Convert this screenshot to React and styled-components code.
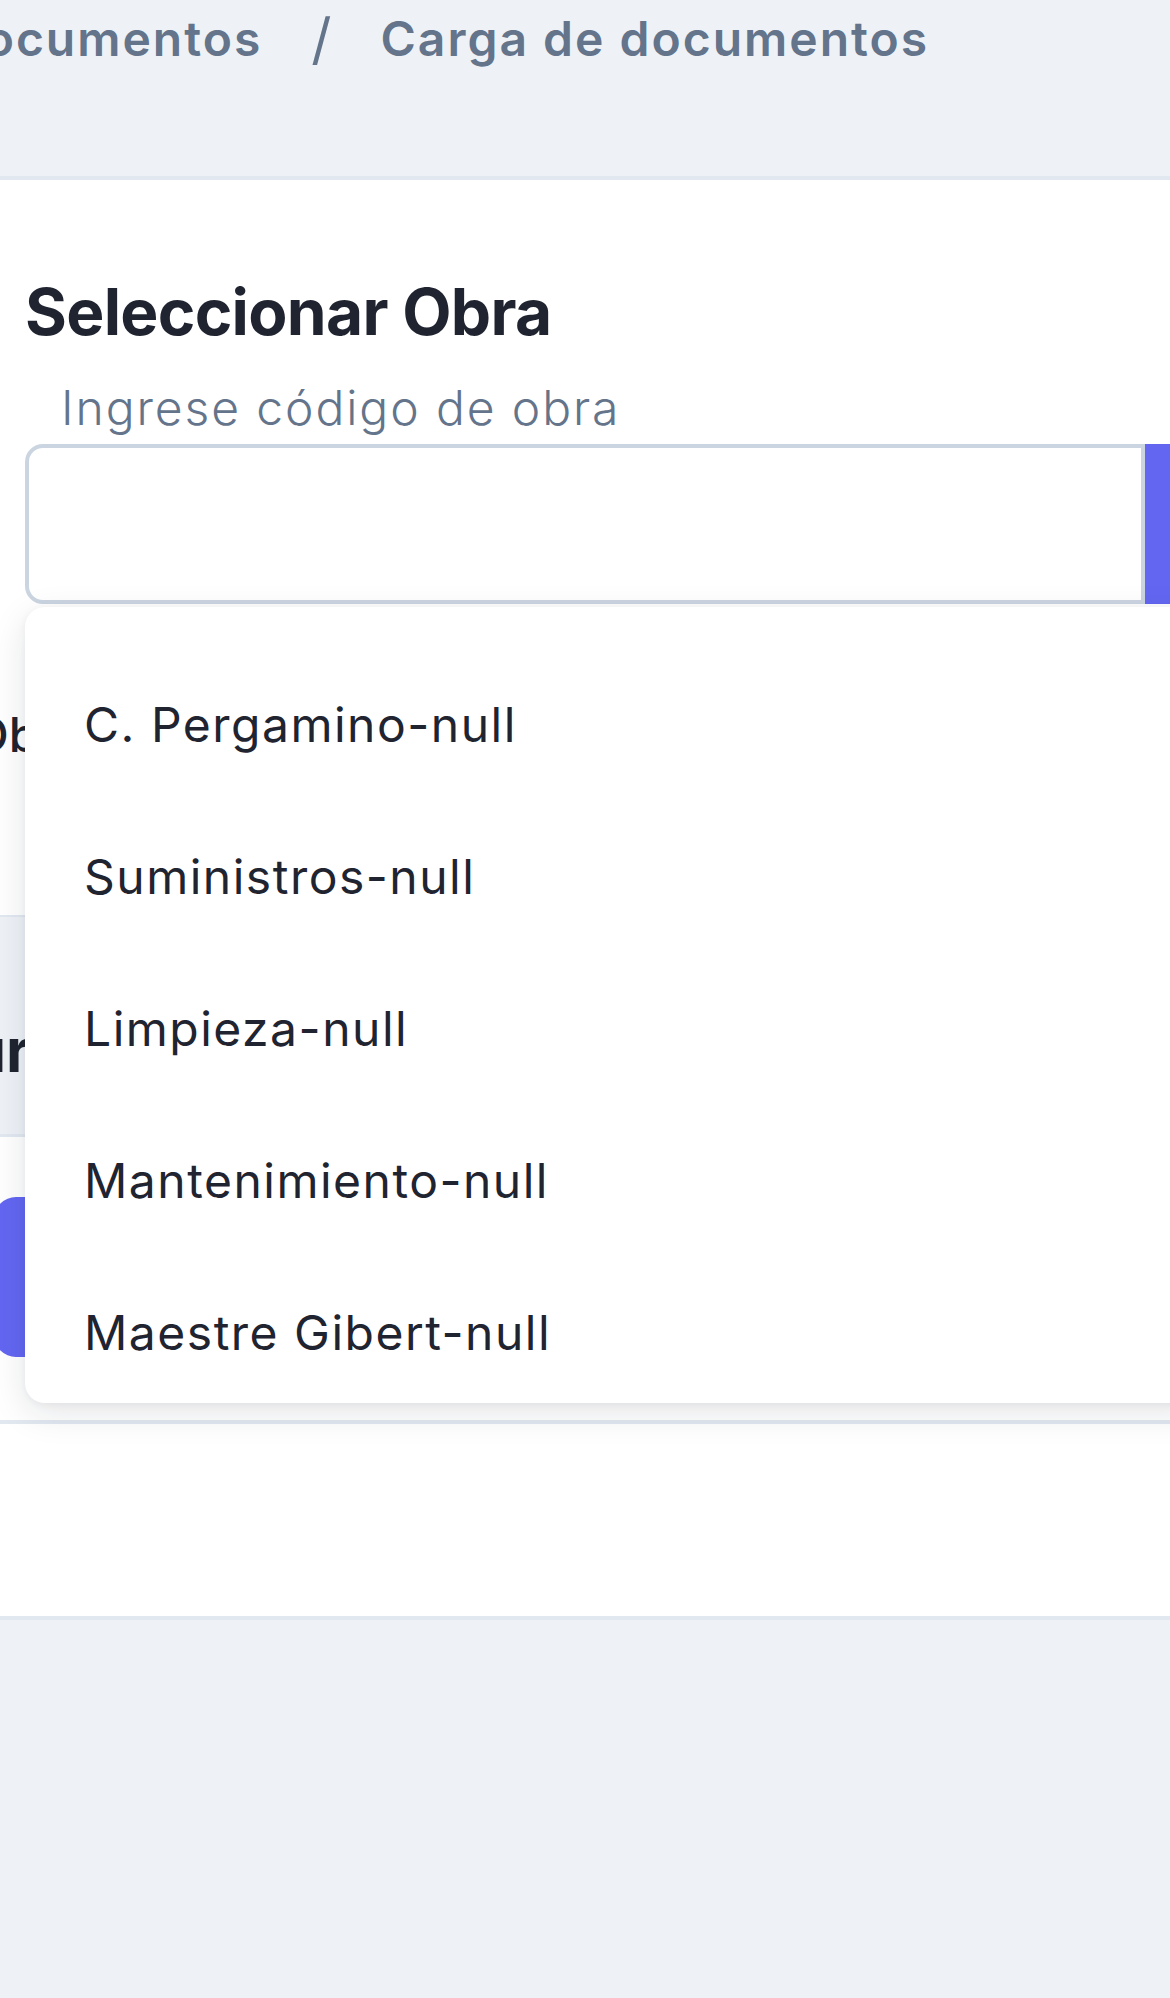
import React from "react";
import styled, { createGlobalStyle } from "styled-components";

const Global = createGlobalStyle`
  html, body { margin: 0; padding: 0; background: #eef2f7; }
  body { font-family: Inter, "Noto Sans", sans-serif; color: #1f2430; }
  * { box-sizing: border-box; }
`;

const Page = styled.div`
  width: 1170px;
  height: 1998px;
  overflow: hidden;
  position: relative;
  background: #eef2f7;
`;

const Header = styled.header`
  height: 180px;
  padding-top: 15px;
  background: #eef2f7;
  border-bottom: 4px solid #e2e8f0;
`;

const Crumbs = styled.nav`
  display: flex;
  align-items: center;
  margin-left: -52px;
  gap: 49px;
  white-space: nowrap;
`;

const Crumb = styled.span`
  font-size: 48px;
  line-height: 48px;
  font-weight: 600;
  letter-spacing: 2px;
  color: #64748b;
`;

const Sep = styled.span`
  font-size: 56px;
  line-height: 48px;
  font-weight: 400;
  color: #64748b;
`;

const Card = styled.main`
  background: #ffffff;
  border-bottom: 4px solid #e2e8f0;
`;

const Top = styled.section`
  padding: 100px 0 156px 25px;
`;

const Title = styled.h1`
  margin: 0;
  font-size: 64px;
  line-height: 64px;
  font-weight: 700;
  letter-spacing: -0.7px;
  color: #1f2430;
`;

const Field = styled.div`
  position: relative;
  margin-top: 40px;
`;

const Label = styled.label`
  display: block;
  padding-left: 36px;
  font-size: 48px;
  line-height: 48px;
  font-weight: 300;
  letter-spacing: 1.9px;
  color: #64748b;
`;

const InputRow = styled.div`
  display: flex;
  margin-top: 12px;
  height: 160px;
`;

const Input = styled.input`
  width: 1120px;
  height: 160px;
  flex: none;
  border: 4px solid #cbd5e1;
  border-radius: 18px 0 0 18px;
  background: #ffffff;
  outline: none;
`;

const SearchButton = styled.button`
  flex: none;
  width: 200px;
  height: 160px;
  border: none;
  background: #6366f1;
`;

const Menu = styled.ul`
  position: absolute;
  left: 0;
  top: calc(100% + 3px);
  width: 1180px;
  margin: 0;
  padding: 36px 0 0;
  list-style: none;
  background: #ffffff;
  border-radius: 20px;
  box-shadow: 0 10px 36px rgba(15, 23, 42, 0.11), 0 2px 8px rgba(15, 23, 42, 0.05);
  z-index: 10;
`;

const Option = styled.li`
  height: 152px;
  display: flex;
  align-items: center;
  padding: 12px 0 0 59px;
  font-size: 48px;
  line-height: 48px;
  font-weight: 400;
  letter-spacing: 1.5px;
  color: #1f2430;
`;

const Selected = styled.p`
  margin: 107px 0 0 -53px;
  font-size: 48px;
  line-height: 48px;
  font-weight: 500;
  color: #1f2430;
  white-space: nowrap;
`;

const THead = styled.div`
  height: 222px;
  display: flex;
  align-items: center;
  padding-top: 48px;
  background: #eef2f7;
  border-top: 2px solid #e2e8f0;
  border-bottom: 3px solid #e2e8f0;
`;

const HeadCell = styled.span`
  margin-left: -67px;
  font-size: 60px;
  line-height: 60px;
  font-weight: 700;
  color: #1f2430;
  white-space: nowrap;
`;

const TRow = styled.div`
  height: 287px;
  padding-top: 60px;
  border-bottom: 4px solid #e2e8f0;
`;

const UploadButton = styled.button`
  display: block;
  margin-left: -6px;
  width: 400px;
  height: 160px;
  border: none;
  border-radius: 22px;
  background: #6366f1;
  color: #ffffff;
  font-family: inherit;
  font-size: 44px;
  font-weight: 600;
`;

const Footer = styled.div`
  height: 192px;
`;

const obras = [
  "C. Pergamino-null",
  "Suministros-null",
  "Limpieza-null",
  "Mantenimiento-null",
  "Maestre Gibert-null",
];

export default function App() {
  return (
    <Page>
      <Global />
      <Header>
        <Crumbs>
          <Crumb>Documentos</Crumb>
          <Sep>/</Sep>
          <Crumb>Carga de documentos</Crumb>
        </Crumbs>
      </Header>
      <Card>
        <Top>
          <Title>Seleccionar Obra</Title>
          <Field>
            <Label>Ingrese código de obra</Label>
            <InputRow>
              <Input type="text" />
              <SearchButton aria-label="Buscar" />
            </InputRow>
            <Menu>
              {obras.map((o) => (
                <Option key={o}>{o}</Option>
              ))}
            </Menu>
          </Field>
          <Selected>Obra seleccionada: ninguna</Selected>
        </Top>
        <THead>
          <HeadCell>Turno</HeadCell>
        </THead>
        <TRow>
          <UploadButton>Subir archivo</UploadButton>
        </TRow>
        <Footer />
      </Card>
    </Page>
  );
}
